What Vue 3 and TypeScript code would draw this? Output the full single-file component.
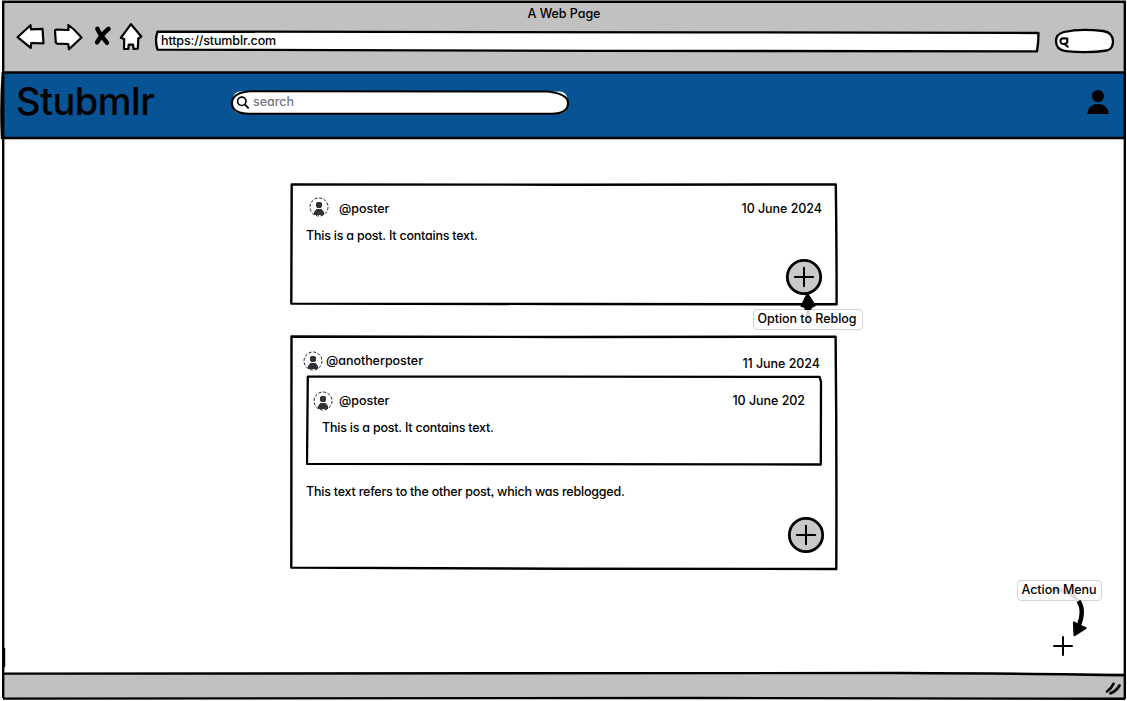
<script setup lang="ts">
interface Post {
  author: string
  date: string
  body: string
}

const original: Post = {
  author: '@poster',
  date: '10 June 2024',
  body: 'This is a post. It contains text.',
}

const reblog: Post & { quoted: Post } = {
  author: '@anotherposter',
  date: '11 June 2024',
  body: 'This text refers to the other post, which was reblogged.',
  quoted: { ...original, date: '10 June 202' },
}
</script>

<template>
  <div class="window">
    <header class="chrome">
      <div class="title">A Web Page</div>
      <div class="toolbar">
        <svg class="nav" width="134" height="32" viewBox="14 21 134 32">
          <g fill="#fff" stroke="#000" stroke-width="2.2" stroke-linejoin="round">
            <path d="M17.5 37.2 L30.5 25.2 L31 29.3 L42.5 28.8 L43.5 43.3 L31.2 43 L30.8 47.8 Z" />
            <path d="M55 30.5 L56.5 29.5 L68.5 30 L68.3 25 L74 29.5 L81.5 37.5 L69 49.3 L68.2 44 L57 43.6 L55.8 42.5 Z" />
            <path d="M131 24.2 L141.3 36.5 L138.3 38.5 L137.8 48.6 L133.6 49 L133 44.6 L128.7 44.6 L128.3 49 L124 49 L124.2 39 L120.8 37.8 Z" />
          </g>
          <path d="M97.3 28.7 Q99.5 34 107 42.8 M108.6 28.8 Q101.5 34.5 97 42.3" fill="none" stroke="#000" stroke-width="4.4" stroke-linecap="round" />
        </svg>
        <div class="address">
          <svg class="frame" width="886" height="24" viewBox="154 29 886 24">
            <path d="M157.5 31.6 L700 32.3 L1038.5 33 Q1038.5 43 1037 51.3 L600 50.8 L157.5 49.6 Q154.5 40 157.5 31.6 Z" fill="#fff" stroke="#000" stroke-width="2.3" stroke-linejoin="round" />
          </svg>
          <span class="url">https://stumblr.com</span>
        </div>
        <svg class="finder" width="62" height="27" viewBox="1053 27 62 27">
          <path d="M1056 41 Q1056 34 1064 32 Q1080 28.5 1103 31 Q1113 32.5 1113 41.5 Q1113 49 1107 50.5 Q1088 53.5 1066 51.2 Q1056 50 1056 41 Z" fill="#fff" stroke="#000" stroke-width="2.3" />
          <path d="M1060.3 41 Q1060.5 38.3 1063.5 38.2 L1067.3 38.6 L1067.2 42.8 Q1064 45 1061.3 43.5 Z M1064.5 44 L1067.8 46.8" fill="none" stroke="#000" stroke-width="2" stroke-linecap="round" stroke-linejoin="round" />
        </svg>
      </div>
    </header>

    <div class="masthead">
      <h1 class="brand">Stubmlr</h1>
      <div class="search">
        <svg class="frame" width="340" height="27" viewBox="230 89 340 27">
          <rect x="232.5" y="91.5" width="335" height="22" rx="8" fill="#fff" />
          <path d="M250 91.3 L548 91.5 Q568 94 568 103 Q568 113.5 552 113.7 L250 113.7 Q232 114 232 103 Q232 93 250 91.3 Z" fill="#fff" stroke="#000" stroke-width="2" />
          <circle cx="241.8" cy="101.3" r="4.2" fill="none" stroke="#000" stroke-width="1.6" />
          <path d="M245 104.6 L248.2 107.8" stroke="#000" stroke-width="1.8" stroke-linecap="round" />
        </svg>
        <span class="hint">search</span>
      </div>
      <svg class="account" width="22" height="25" viewBox="0 0 22 25">
        <circle cx="11" cy="6.1" r="6.1" />
        <path d="M.5 24 Q.3 20.5 2.7 17.5 Q5 14.5 8 14.2 L14 14.2 Q17 14.5 19.3 17.5 Q21.7 20.5 21.5 24 Z" />
      </svg>
    </div>

    <main class="page">
      <article class="card first">
        <svg class="frame" width="548" height="123" viewBox="290 183 548 123">
          <path d="M291.7 184.5 L560 184.7 L835.8 184.5 Q836.6 240 836.6 304.3 L560 304 L291.3 303.6 Z" fill="none" stroke="#000" stroke-width="2.4" stroke-linejoin="round" />
        </svg>
        <div class="byline">
          <svg class="avatar" width="20" height="20" viewBox="0 0 20 20">
            <circle cx="10" cy="10" r="9" />
            <path d="M8.3 5h3.4L13 6.3v3.2L11.7 11H8.3L7 9.5V6.3zM5 18v-3l2.5-3h5l2.5 3v3z" />
          </svg>
          <span class="author">{{ original.author }}</span>
          <time class="date">{{ original.date }}</time>
        </div>
        <p class="body">{{ original.body }}</p>
        <svg class="plus" width="38" height="38" viewBox="-19 -19 38 38">
          <circle r="16.7" />
          <path d="M-9.2 0H9.2M0 -9.2V9.2" />
        </svg>
        <div class="note reblog-note">
          <svg class="pointer" width="18" height="40" viewBox="799 292 18 40">
            <path d="M807.5 294 L814.8 305.5 L811 307 L810.5 309 L805.5 309 L805.2 307 L801.5 306 Z" stroke="#000" stroke-width="2" stroke-linejoin="round" />
            <path d="M808 310V324" stroke="#d4d4d4" stroke-width="3.6" />
          </svg>
          <span>Option to Reblog</span>
        </div>
      </article>

      <article class="card second">
        <svg class="frame" width="548" height="236" viewBox="290 335 548 236">
          <path d="M291.5 336.5 L560 337 L835.6 336.7 Q836.8 450 836.3 569 L560 568.7 L291.3 567.6 Z" fill="none" stroke="#000" stroke-width="2.4" stroke-linejoin="round" />
        </svg>
        <div class="byline">
          <svg class="avatar" width="20" height="20" viewBox="0 0 20 20">
            <circle cx="10" cy="10" r="9" />
            <path d="M8.3 5h3.4L13 6.3v3.2L11.7 11H8.3L7 9.5V6.3zM5 18v-3l2.5-3h5l2.5 3v3z" />
          </svg>
          <span class="author">{{ reblog.author }}</span>
          <time class="date">{{ reblog.date }}</time>
        </div>
        <section class="quote">
          <svg class="frame" width="517" height="92" viewBox="306 375 517 92">
            <path d="M307.8 376.6 L560 376.6 L819.6 376.9 L821 382 L820.8 464.5 L560 464.1 L307 463.8 Z" fill="none" stroke="#000" stroke-width="2.3" stroke-linejoin="round" />
          </svg>
          <div class="byline">
            <svg class="avatar" width="20" height="20" viewBox="0 0 20 20">
              <circle cx="10" cy="10" r="9" />
              <path d="M8.3 5h3.4L13 6.3v3.2L11.7 11H8.3L7 9.5V6.3zM5 18v-3l2.5-3h5l2.5 3v3z" />
            </svg>
            <span class="author">{{ reblog.quoted.author }}</span>
            <time class="date">{{ reblog.quoted.date }}</time>
          </div>
          <p class="body">{{ reblog.quoted.body }}</p>
        </section>
        <p class="body">{{ reblog.body }}</p>
        <svg class="plus" width="38" height="38" viewBox="-19 -19 38 38">
          <circle r="16.7" />
          <path d="M-9.2 0H9.2M0 -9.2V9.2" />
        </svg>
      </article>

      <div class="actions">
        <div class="note action-note">
          <svg class="pointer" width="80" height="60" viewBox="1022 580 80 60">
            <path d="M1052 590 Q1068 588 1079 602" fill="none" stroke="#ddd" stroke-width="4" />
            <path d="M1078.5 601 Q1084.8 610 1079 625" fill="none" stroke="#000" stroke-width="4.4" />
            <path d="M1074 622.5 L1078 625 L1085.5 628 L1074.5 635 Z" stroke="#000" stroke-width="2.2" stroke-linejoin="round" />
          </svg>
          <span>Action Menu</span>
        </div>
        <svg class="add" width="20" height="20" viewBox="0 0 20 20">
          <path d="M1 10H19M10 1V19" />
        </svg>
      </div>
    </main>

    <footer class="status">
      <svg width="18" height="15" viewBox="1104 681 18 15">
        <path d="M1107 691.5 Q1111.5 688.5 1113.5 683.8 M1110.5 693.3 Q1116.5 691 1119.5 685.5" fill="none" stroke="#000" stroke-width="2.7" stroke-linecap="round" />
      </svg>
    </footer>

    <svg class="outline" width="1127" height="701" viewBox="0 0 1127 701">
      <g fill="none" stroke="#000" stroke-width="2.4">
        <path d="M2 1.7H1126" />
        <path d="M3.2 1V698" />
        <path d="M1124.8 1V699" />
        <path d="M2 72.5H1125" />
        <path d="M2.8 72 Q0.5 105 2 138 H1125" />
        <path d="M3 673.6 Q500 672.8 900 673 Q1050 673.5 1125 675.3" />
        <path d="M3 698.6 Q300 697 700 698 L1125 698.8" />
        <path d="M4 648V667" />
      </g>
    </svg>
  </div>
</template>

<style>
html,
body {
  margin: 0;
  background: #fff;
  overflow: hidden;
}
</style>

<style scoped>
.window {
  position: relative;
  display: flex;
  flex-direction: column;
  box-sizing: border-box;
  width: 1127px;
  height: 701px;
  padding: 1px 2px 3px 3px;
  font: 450 12.5px/16px Inter, 'Liberation Sans', sans-serif;
  font-feature-settings: 'cv11', 'ss03';
  letter-spacing: -0.04px;
  color: #000;
  white-space: nowrap;
}
svg {
  display: block;
  flex: none;
}
.outline,
.frame {
  position: absolute;
  left: 0;
  top: 0;
  pointer-events: none;
}
.chrome {
  height: 71px;
  background: #c1c1c1;
}
.title {
  padding-top: 5px;
  height: 15px;
  text-align: center;
}
.toolbar {
  display: flex;
  align-items: flex-start;
  padding-left: 11px;
}
.address {
  position: relative;
  width: 886px;
  height: 24px;
  margin: 8px 0 0 6px;
}
.url {
  position: relative;
  display: block;
  padding: 4px 0 0 7px;
  letter-spacing: -0.12px;
}
.finder {
  margin: 6px 0 0 13px;
}
.masthead {
  display: flex;
  align-items: flex-start;
  height: 66px;
  background: #085394;
}
.brand {
  width: 214px;
  margin: 5px 0 0 13px;
  font-size: 38px;
  line-height: 48px;
  font-weight: 500;
  letter-spacing: -0.5px;
}
.search {
  position: relative;
  width: 340px;
  height: 27px;
  margin-top: 17px;
}
.hint {
  position: relative;
  display: block;
  padding: 5px 0 0 23px;
  color: #76767e;
}
.account {
  margin: 18px 16px 0 auto;
}
.page {
  display: flex;
  flex-direction: column;
  flex: 1;
  position: relative;
}
.card {
  position: relative;
  box-sizing: border-box;
  width: 548px;
  margin-left: 287px;
}
.first {
  height: 123px;
  margin-top: 45px;
  padding: 14px 16px 0 19px;
}
.second {
  height: 236px;
  margin-top: 29px;
  padding: 16px 18px 0 13px;
}
.byline {
  display: flex;
  align-items: flex-start;
  height: 20px;
}
.avatar circle {
  fill: none;
  stroke: #222;
  stroke-width: 1;
  stroke-dasharray: 3 1.7;
}
.avatar path {
  fill: #303238;
}
.date {
  margin-left: auto;
}
.first .author {
  margin: 4px 0 0 10px;
}
.first .date {
  margin-top: 4px;
}
.body {
  margin: 0;
  letter-spacing: -0.22px;
}
.first > .body {
  margin: 11px 0 0 -3px;
}
.plus circle {
  fill: #c9c9c9;
  stroke: #000;
  stroke-width: 2.8;
}
.plus path {
  stroke: #000;
  stroke-width: 2;
  stroke-linecap: round;
}
.first .plus {
  margin: 14px 0 0 476px;
}
.second > .byline .author {
  margin: 2px 0 0 3px;
}
.second > .byline .date {
  margin-top: 5px;
}
.quote {
  position: relative;
  box-sizing: border-box;
  width: 517px;
  height: 92px;
  margin: 4px 0 0 3px;
  padding: 16px 18px 0 7px;
}
.quote .author {
  margin: 2px 0 0 6px;
}
.quote .date {
  margin-top: 2px;
}
.quote .body {
  margin: 9px 0 0 9px;
}
.second > .body {
  margin: 17px 0 0 3px;
}
.second .plus {
  margin: 16px 0 0 484px;
}
.note {
  position: absolute;
  box-sizing: border-box;
  height: 21px;
  border: 1px solid #d5d5d5;
  border-radius: 4px;
  background: #fff;
  line-height: 18px;
  text-align: center;
}
.note span {
  position: relative;
}
.pointer {
  position: absolute;
}
.reblog-note {
  left: 463px;
  top: 126px;
  width: 110px;
  padding-right: 2px;
}
.reblog-note .pointer {
  left: 45px;
  top: -18px;
}
.actions {
  position: absolute;
  left: 1014px;
  top: 442px;
  width: 85px;
}
.action-note {
  left: 0;
  top: 0;
  width: 85px;
  padding-right: 1px;
}
.action-note .pointer {
  left: 4px;
  top: -1px;
}
.add {
  margin: 56px 0 0 36px;
}
.add path {
  stroke: #000;
  stroke-width: 2;
  stroke-linecap: round;
}
.status {
  display: flex;
  justify-content: flex-end;
  height: 25px;
  background: #c1c1c1;
}
.status svg {
  margin: 8px 3px 0 0;
}
</style>
